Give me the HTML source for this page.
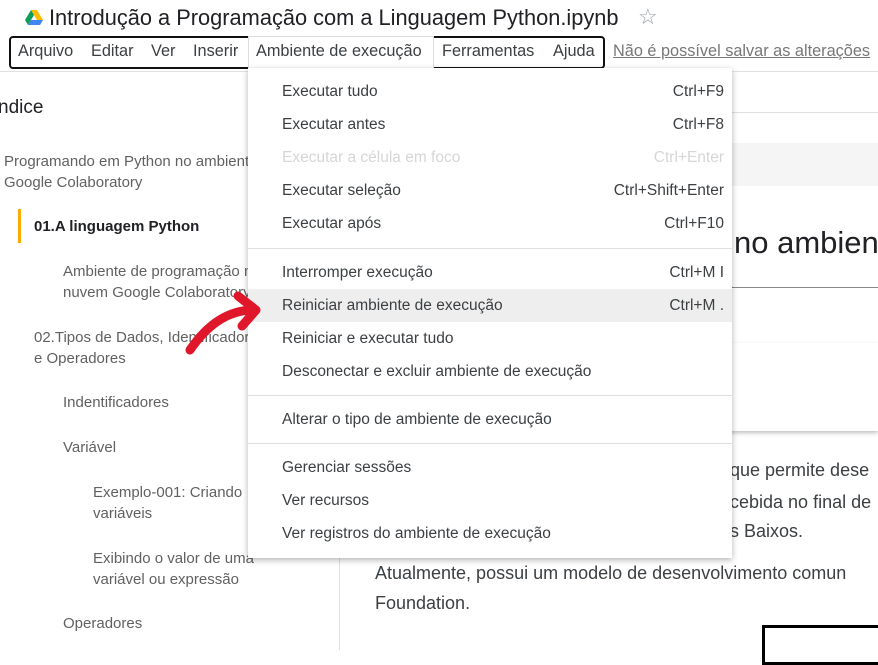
<!DOCTYPE html>
<html><head><meta charset="utf-8"><style>
*{margin:0;padding:0;box-sizing:border-box}
body{width:878px;height:650px;overflow:hidden;background:#fff;font-family:"Liberation Sans",Arial,sans-serif;position:relative;color:#212121}
.a{position:absolute;white-space:nowrap}
.sb{font-size:15px;color:#616161;line-height:21px}
.mi{position:absolute;left:0;width:484px;height:33px;font-size:15.5px;color:#3c4043;line-height:33px}
.mi span{position:absolute;left:34px}
.mi b{position:absolute;right:8px;font-weight:normal}
.sep{position:absolute;left:0;width:484px;height:1px;background:#e0e0e0}
.ct{font-size:18px;color:#3c4043}
.mb{font-size:16.3px;color:#3c4043;top:42px}
</style></head><body>
<svg class="a" style="left:25px;top:10px" width="18" height="16" viewBox="0 0 18 16"><polygon points="6,0 12,0 18,10 15,15" fill="#fbbc04"/><polygon points="6,0 0,10 3,15 9,5" fill="#0f9d58"/><polygon points="3,15 15,15 18,10 6,10" fill="#4285f4"/></svg>
<div class="a" style="left:49px;top:5px;font-size:21.8px;color:#202124">Introdução a Programação com a Linguagem Python.ipynb</div>
<div class="a" style="left:638px;top:4px;font-size:22px;color:#9aa0a6">☆</div>
<div class="a" style="left:9px;top:36px;width:596px;height:33px;border:2px solid #111;border-radius:4px"></div>
<div class="a mb" style="left:18px">Arquivo</div>
<div class="a mb" style="left:91px">Editar</div>
<div class="a mb" style="left:151px">Ver</div>
<div class="a mb" style="left:193px">Inserir</div>
<div class="a" style="left:248px;top:36px;width:186px;height:33px;background:#fff;border:1px solid #ddd;border-bottom:none"></div>
<div class="a mb" style="left:256px">Ambiente de execução</div>
<div class="a mb" style="left:442px">Ferramentas</div>
<div class="a mb" style="left:553px">Ajuda</div>
<div class="a mb" style="left:613px;color:#777;text-decoration:underline">Não é possível salvar as alterações</div>
<div class="a" style="left:0;top:71px;width:878px;height:1px;background:#e0e0e0"></div>
<!-- sidebar -->
<div class="a" style="left:339px;top:72px;width:1px;height:578px;background:#e0e0e0"></div>
<div class="a" style="left:-2px;top:97px;font-size:19px;color:#202124">ndice</div>
<div class="a sb" style="left:4px;top:151px">Programando em Python no ambiente<br>Google Colaboratory</div>
<div class="a" style="left:18px;top:209px;width:3px;height:34px;background:#f9ab00"></div>
<div class="a sb" style="left:34px;top:216px;font-weight:bold;color:#202124">01.A linguagem Python</div>
<div class="a sb" style="left:63px;top:261px">Ambiente de programação na<br>nuvem Google Colaboratory</div>
<div class="a sb" style="left:34px;top:327px">02.Tipos de Dados, Identificadores<br>e Operadores</div>
<div class="a sb" style="left:63px;top:392px">Indentificadores</div>
<div class="a sb" style="left:63px;top:437px">Variável</div>
<div class="a sb" style="left:93px;top:482px">Exemplo-001: Criando<br>variáveis</div>
<div class="a sb" style="left:93px;top:548px">Exibindo o valor de uma<br>variável ou expressão</div>
<div class="a sb" style="left:63px;top:613px">Operadores</div>
<!-- content -->
<div class="a" style="left:340px;top:112px;width:538px;height:1px;background:#e0e0e0"></div>
<div class="a" style="left:340px;top:143px;width:538px;height:43px;background:#f5f5f5"></div>
<div class="a" style="left:734px;top:225px;font-size:31px;color:#202124">no ambiente</div>
<div class="a" style="left:700px;top:287px;width:178px;height:1px;background:#888"></div>
<div class="a" style="left:340px;top:343px;width:538px;height:88px;background:#fff;box-shadow:0 2px 4px rgba(0,0,0,.25)"></div>
<div class="a ct" style="left:730px;top:460px">que permite dese</div>
<div class="a ct" style="left:730px;top:492px">cebida no final de</div>
<div class="a ct" style="left:730px;top:521px">s Baixos.</div>
<div class="a ct" style="left:375px;top:563px">Atualmente, possui um modelo de desenvolvimento comun</div>
<div class="a ct" style="left:375px;top:593px">Foundation.</div>
<div class="a" style="left:762px;top:625px;width:130px;height:40px;border:3px solid #000"></div>
<!-- menu -->
<div class="a" style="left:248px;top:68px;width:484px;height:490px;background:#fff;box-shadow:0 2px 6px rgba(0,0,0,.3)">
<div class="mi" style="top:7px"><span>Executar tudo</span><b>Ctrl+F9</b></div>
<div class="mi" style="top:40px"><span>Executar antes</span><b>Ctrl+F8</b></div>
<div class="mi" style="top:73px;color:#d6d6d6"><span>Executar a célula em foco</span><b>Ctrl+Enter</b></div>
<div class="mi" style="top:106px"><span>Executar seleção</span><b>Ctrl+Shift+Enter</b></div>
<div class="mi" style="top:139px"><span>Executar após</span><b>Ctrl+F10</b></div>
<div class="sep" style="top:180px"></div>
<div class="mi" style="top:188px"><span>Interromper execução</span><b>Ctrl+M I</b></div>
<div class="mi" style="top:221px;background:#eee"><span>Reiniciar ambiente de execução</span><b>Ctrl+M .</b></div>
<div class="mi" style="top:254px"><span>Reiniciar e executar tudo</span></div>
<div class="mi" style="top:287px"><span>Desconectar e excluir ambiente de execução</span></div>
<div class="sep" style="top:327px"></div>
<div class="mi" style="top:335px"><span>Alterar o tipo de ambiente de execução</span></div>
<div class="sep" style="top:375px"></div>
<div class="mi" style="top:383px"><span>Gerenciar sessões</span></div>
<div class="mi" style="top:416px"><span>Ver recursos</span></div>
<div class="mi" style="top:449px"><span>Ver registros do ambiente de execução</span></div>
</div>
<!-- arrow -->
<svg class="a" style="left:180px;top:290px" width="85" height="70" viewBox="0 0 85 70"><path d="M10 60 C25 38 45 20 74 20" stroke="#e0162b" stroke-width="9" fill="none" stroke-linecap="round"/><path d="M58 6 L76 20 L62 36" stroke="#e0162b" stroke-width="9" fill="none" stroke-linecap="round" stroke-linejoin="round"/></svg>
</body></html>
